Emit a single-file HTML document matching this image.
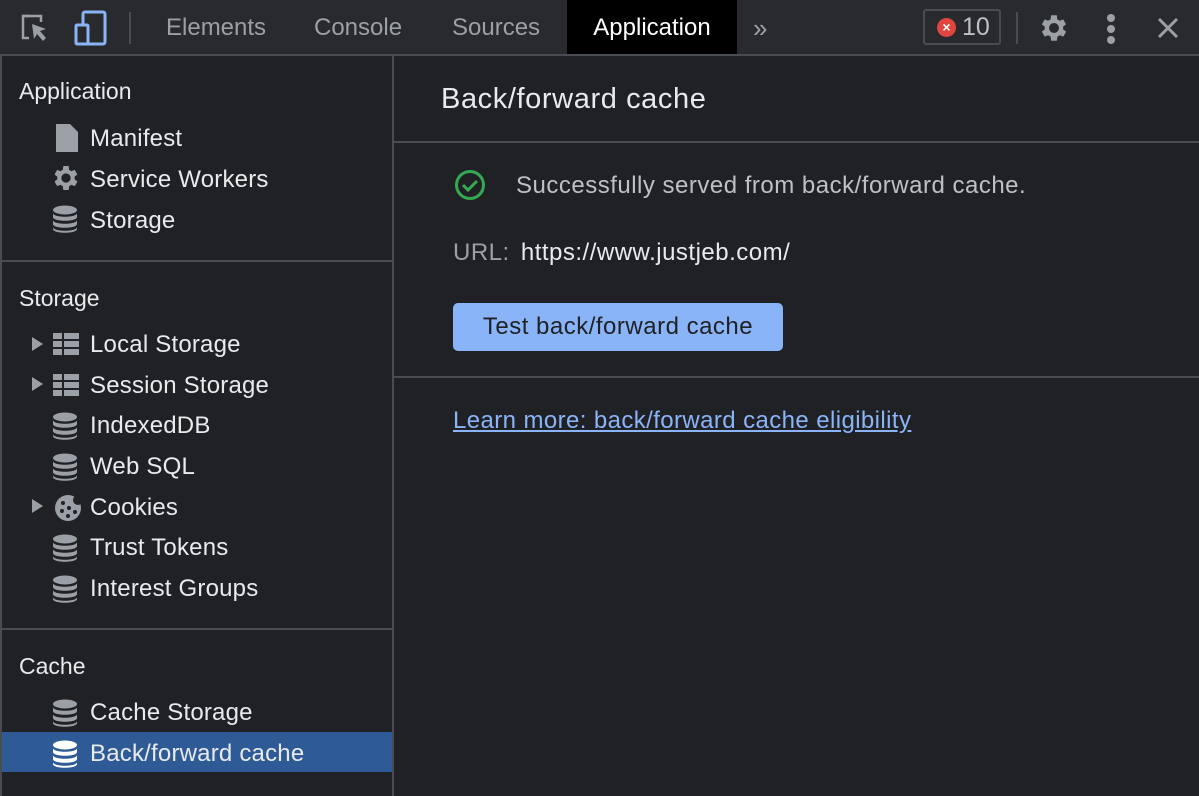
<html><head><style>
body{margin:0;width:1199px;height:796px;background:#202124;font-family:"Liberation Sans",sans-serif;color:#e8eaed;overflow:hidden;position:relative}
.tb{position:absolute;left:0;top:0;width:1199px;height:54px;background:#292a2d;border-bottom:2px solid #494c50}
.tab{position:absolute;top:0;height:54px;line-height:56px;font-size:24px;color:#9aa0a6}
.side{position:absolute;left:0;top:56px;width:390px;height:740px;border-right:2px solid #494c50;border-left:2px solid #494c50}
.h{position:absolute;left:17px;font-size:23px;color:#e8eaed}
.it{position:absolute;left:88px;font-size:24px;color:#e8eaed;letter-spacing:0.2px}
.ic{position:absolute;left:52px}
.div{position:absolute;left:0;width:390px;height:2px;background:#494c50}
.arr{position:absolute;left:30px;width:0;height:0;border-left:11px solid #9aa0a6;border-top:7px solid transparent;border-bottom:7px solid transparent}
.m{position:absolute;font-size:24px;letter-spacing:0.5px}
</style></head><body>
<div class="tb">
<svg style="position:absolute;left:20px;top:14px" width="32" height="30" viewBox="0 0 32 30"><path d="M10 2H3v22h6" fill="none" stroke="#9aa0a6" stroke-width="2.5"/><path d="M3 2h18v6" fill="none" stroke="#9aa0a6" stroke-width="2.5"/><path d="M12 10l14 5-6 2 6 7-3 3-6-7-3 5z" fill="#9aa0a6"/></svg>
<svg style="position:absolute;left:74px;top:10px" width="34" height="36" viewBox="0 0 34 36"><rect x="9" y="2" width="22" height="32" rx="2" fill="none" stroke="#8ab4f8" stroke-width="3"/><rect x="2" y="15" width="12" height="19" rx="1" fill="#292a2d" stroke="#8ab4f8" stroke-width="3"/></svg>
<div style="position:absolute;left:129px;top:12px;width:2px;height:32px;background:#494c50"></div>
<div class="tab" style="left:166px">Elements</div>
<div class="tab" style="left:314px">Console</div>
<div class="tab" style="left:452px">Sources</div>
<div class="tab" style="left:567px;width:170px;background:#000;color:#fff;text-align:center">Application</div>
<div class="tab" style="left:753px;font-size:26px">»</div>
<div style="position:absolute;left:923px;top:9px;width:78px;height:36px;border:2px solid #494c50;border-radius:3px;box-sizing:border-box"></div>
<div style="position:absolute;left:937px;top:18px;width:19px;height:19px;border-radius:50%;background:#e0463f;color:#fff;font-size:14px;line-height:19px;text-align:center;font-weight:bold">×</div>
<div style="position:absolute;left:962px;top:13px;font-size:25px;color:#bdc1c6">10</div>
<div style="position:absolute;left:1016px;top:12px;width:2px;height:32px;background:#494c50"></div>
<svg style="position:absolute;left:1037px;top:11px" width="34" height="34" viewBox="0 0 24 24"><path fill="#9aa0a6" d="M19.4 13a7.5 7.5 0 000-2l2.1-1.6-2-3.5-2.5 1a7 7 0 00-1.7-1L15 3h-4l-.4 2.9a7 7 0 00-1.7 1l-2.5-1-2 3.5L6.5 11a7.5 7.5 0 000 2l-2.1 1.6 2 3.5 2.5-1a7 7 0 001.7 1L11 21h4l.4-2.9a7 7 0 001.7-1l2.5 1 2-3.5zM13 15.5A3.5 3.5 0 1113 8.5a3.5 3.5 0 010 7z" transform="translate(-1 0)"/></svg>
<div style="position:absolute;left:1107px;top:14px;width:8px;height:8px;border-radius:50%;background:#9aa0a6;box-shadow:0 11px #9aa0a6,0 22px #9aa0a6"></div>
<svg style="position:absolute;left:1157px;top:17px" width="22" height="22"><path d="M2 2L20 20M20 2L2 20" stroke="#9aa0a6" stroke-width="3"/></svg>
</div>
<div class="side">
<div class="h" style="top:22px">Application</div>
<svg class="ic" style="left:54px;top:68px" width="22" height="28"><path d="M0 0h14l8 8v20H0z" fill="#9aa0a6"/></svg>
<div class="it" style="top:69px">Manifest</div>
<svg class="ic" style="left:48px;top:106px" width="32" height="32" viewBox="0 0 24 24"><path fill="#9aa0a6" d="M19.4 13a7.5 7.5 0 000-2l2.1-1.6-2-3.5-2.5 1a7 7 0 00-1.7-1L15 3h-4l-.4 2.9a7 7 0 00-1.7 1l-2.5-1-2 3.5L6.5 11a7.5 7.5 0 000 2l-2.1 1.6 2 3.5 2.5-1a7 7 0 001.7 1L11 21h4l.4-2.9a7 7 0 001.7-1l2.5 1 2-3.5zM13 15.5A3.5 3.5 0 1113 8.5a3.5 3.5 0 010 7z" transform="translate(-1 0)"/></svg>
<div class="it" style="top:110px">Service Workers</div>
<div class="it" style="top:151px">Storage</div>
<div class="div" style="top:204px"></div>
<div class="h" style="top:229px">Storage</div>
<div class="arr" style="top:281px"></div>
<div class="it" style="top:275px">Local Storage</div>
<div class="arr" style="top:321px"></div>
<div class="it" style="top:316px">Session Storage</div>
<div class="it" style="top:356px">IndexedDB</div>
<div class="it" style="top:397px">Web SQL</div>
<div class="arr" style="top:443px"></div>
<svg class="ic" style="top:438px" width="28" height="28"><circle cx="14" cy="14" r="13" fill="#9aa0a6"/><circle cx="24" cy="6" r="5" fill="#202124"/><circle cx="9" cy="9" r="2" fill="#202124"/><circle cx="8" cy="17" r="2" fill="#202124"/><circle cx="15" cy="14" r="2" fill="#202124"/><circle cx="14" cy="22" r="2" fill="#202124"/><circle cx="21" cy="18" r="2" fill="#202124"/></svg>
<div class="it" style="top:438px">Cookies</div>
<div class="it" style="top:478px">Trust Tokens</div>
<div class="it" style="top:519px">Interest Groups</div>
<div class="div" style="top:572px"></div>
<div class="h" style="top:597px">Cache</div>
<div class="it" style="top:643px">Cache Storage</div>
<div style="position:absolute;left:0;top:676px;width:390px;height:40px;background:#2e5b96"></div>
<div class="it" style="top:684px">Back/forward cache</div>
</div>
<div style="position:absolute;left:392px;top:141px;width:807px;height:2px;background:#494c50"></div>
<div style="position:absolute;left:392px;top:376px;width:807px;height:2px;background:#494c50"></div>
<div style="position:absolute;left:441px;top:83px;font-size:29px;letter-spacing:0.6px;color:#e8eaed">Back/forward cache</div>
<svg style="position:absolute;left:454px;top:169px" width="32" height="32"><circle cx="16" cy="16" r="13.5" fill="none" stroke="#34a853" stroke-width="3"/><path d="M9 16l5 5 9-9" fill="none" stroke="#34a853" stroke-width="3"/></svg>
<div class="m" style="left:516px;top:172px;color:#bdc1c6">Successfully served from back/forward cache.</div>
<div class="m" style="left:453px;top:239px;color:#9aa0a6">URL:&nbsp;<span style="color:#e8eaed;margin-left:4px">https://www.justjeb.com/</span></div>
<div style="position:absolute;left:453px;top:303px;width:330px;height:48px;background:#8ab4f8;border-radius:5px;color:#202124;font-size:24px;letter-spacing:0.5px;line-height:48px;text-align:center">Test back/forward cache</div>
<div class="m" style="left:453px;top:407px;color:#8ab4f8;text-decoration:underline;letter-spacing:0.4px">Learn more: back/forward cache eligibility</div>
<svg width="0" height="0" style="position:absolute"><defs>
<g id="db"><ellipse cx="13" cy="5" rx="12" ry="4.5" fill="#9aa0a6"/><path d="M1 8c0 5 24 5 24 0v4c0 5-24 5-24 0zM1 15c0 5 24 5 24 0v4c0 5-24 5-24 0zM1 22c0 5 24 5 24 0v2c0 5-24 5-24 0z" fill="#9aa0a6"/></g>
<g id="gr"><rect x="0" y="0" width="9" height="6" fill="#9aa0a6"/><rect x="11" y="0" width="15" height="6" fill="#9aa0a6"/><rect x="0" y="8" width="9" height="6" fill="#9aa0a6"/><rect x="11" y="8" width="15" height="6" fill="#9aa0a6"/><rect x="0" y="16" width="9" height="6" fill="#9aa0a6"/><rect x="11" y="16" width="15" height="6" fill="#9aa0a6"/></g>
</defs></svg>
<svg style="position:absolute;left:52px;top:205px" width="27" height="30"><use href="#db"/></svg>
<svg style="position:absolute;left:53px;top:333px" width="27" height="23"><use href="#gr"/></svg>
<svg style="position:absolute;left:53px;top:374px" width="27" height="23"><use href="#gr"/></svg>
<svg style="position:absolute;left:52px;top:412px" width="27" height="30"><use href="#db"/></svg>
<svg style="position:absolute;left:52px;top:453px" width="27" height="30"><use href="#db"/></svg>
<svg style="position:absolute;left:52px;top:534px" width="27" height="30"><use href="#db"/></svg>
<svg style="position:absolute;left:52px;top:575px" width="27" height="30"><use href="#db"/></svg>
<svg style="position:absolute;left:52px;top:699px" width="27" height="30"><use href="#db"/></svg>
<svg style="position:absolute;left:52px;top:740px" width="27" height="30"><g fill="#fff"><ellipse cx="13" cy="5" rx="12" ry="4.5"/><path d="M1 8c0 5 24 5 24 0v4c0 5-24 5-24 0zM1 15c0 5 24 5 24 0v4c0 5-24 5-24 0zM1 22c0 5 24 5 24 0v2c0 5-24 5-24 0z"/></g></svg>
</body></html>
